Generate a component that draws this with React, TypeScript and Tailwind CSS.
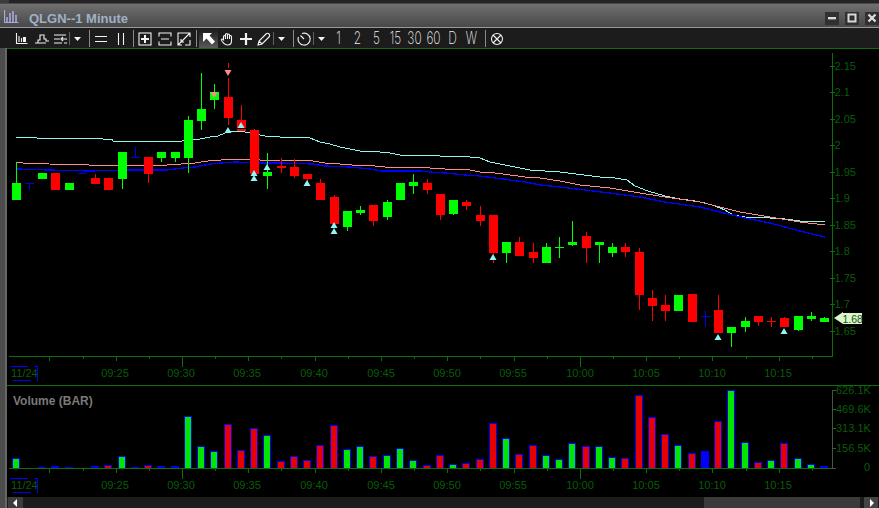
import React from "react";

type C = [number, number, number, number, number, string];
const G = "#00ff00", R = "#ff0000", B = "#0000e0";
// x-left, bodyTop, bodyBottom, wickTop, wickBottom, color
const candles: C[] = [
  [12,183,200,162,200,G],[38,173,179,173,179,G],[51,173,190,173,190,R],[65,183,190,183,190,G],
  [91,178,184,174,184,R],[104,178,190,178,190,R],[118,152,179,152,189,G],[144,157,174,157,183,R],
  [157,152,158,152,162,G],[171,152,158,152,162,G],[184,120,158,116,173,G],[197,109,121,73,130,G],
  [210,92,100,84,109,G],[224,97,118,63,125,R],[237,120,131,105,131,R],[250,130,174,129,174,R],
  [263,172,176,153,189,G],[277,166,168,158,173,R],[290,167,176,159,178,R],[303,174,179,174,182,R],
  [316,183,200,179,200,R],[330,197,224,195,224,R],[343,211,227,211,231,G],[356,210,213,206,215,G],
  [369,205,221,205,226,R],[383,202,217,200,220,G],[396,183,200,183,200,G],[409,182,186,174,194,G],
  [423,183,190,179,194,R],[436,194,215,194,220,R],[449,200,214,200,215,G],[462,202,206,200,210,R],
  [476,215,221,206,226,R],[489,215,253,215,263,R],[502,242,253,242,263,G],[515,242,256,237,256,R],
  [529,252,258,243,263,R],[542,247,263,243,263,G],[568,242,245,221,246,G],[582,236,248,232,263,R],
  [595,242,245,242,263,G],[608,247,253,243,257,G],[621,247,252,243,257,R],[635,252,295,248,310,R],
  [648,298,306,290,321,R],[661,305,311,295,321,R],[674,295,311,295,311,G],[688,294,322,294,322,R],
  [714,310,333,295,333,R],[727,327,333,327,347,G],[741,321,327,317,332,G],[754,316,322,316,326,R],
  [780,318,327,317,327,R],[794,316,330,316,331,G],[807,316,319,312,321,G],[820,318,322,317,322,G],
];
// centre x, top, bottom, crossbar y, colour
const dojis: [number, number, number, number, string][] = [
  [29,183,190,183,B],[82,173,173,173,B],[135,147,158,157,B],[559,237,258,247,G],[705,311,327,316,B],[771,317,327,321,R],
];
const upTris: [number, number][] = [[228,127],[241,122],[254,170],[254,175],[267,164],[307,180],[334,222],[334,228],[493,254],[718,334],[784,328]];
const downTris: [number, number][] = [[228,70],[214,92]];

const cyan = "16,137 36,137 37,138 102,138 103,139 112,139 113,141 182,141 190,140 200,139 210,137 218,136 225,133 236,131 245,132 255,134 265,136 280,137 310,138 320,142 330,144 340,147 350,149 360,151 380,152 390,153 400,155 430,155 440,156 460,156 470,157 480,158 485,160 490,162 500,164 510,166 520,168 530,170 545,171 560,172 600,177 615,178 627,180 635,186 648,191 665,196 680,199 695,201 705,203 715,206 725,210 733,215 745,217 770,218 785,219 800,221 825,221";
const pink = "16,162 23,163 49,164 89,165 130,165 167,165 195,163 208,161 221,160 235,159 260,160 280,160 313,161 325,163 340,164 352,165 375,166 385,167 420,167 430,168 445,169 470,170 480,172 495,173 510,175 525,177 540,178 560,181 580,185 610,188 640,193 665,197 700,202 720,207 740,212 770,217 800,222 825,225";
const blue = "17,169 49,170 89,171 130,170 167,170 182,168 195,167 210,164 221,163 235,162 260,163 280,163 313,164 325,166 350,167 370,169 382,171 420,171 430,172 445,173 465,175 480,176 495,178 510,180 525,182 540,185 560,187 585,190 610,193 640,197 665,202 700,207 720,212 745,218 770,223 800,231 825,237";

const prices: [string, number][] = [["2.15",66],["2.1",92],["2.05",119],["2",145],["1.95",172],["1.9",198],["1.85",225],["1.8",251],["1.75",278],["1.7",304],["1.65",331]];
const times: [string, number][] = [["09:25",115],["09:30",181],["09:35",247],["09:40",314],["09:45",381],["09:50",447],["09:55",513],["10:00",580],["10:05",646],["10:10",712],["10:15",778]];

const GV = "#00e600", RV = "#e60000", BV = "#0000ff";
const vols: [number, number, string][] = [
  [12,458,GV],[38,467,BV],[51,466,BV],[65,467,BV],[91,466,BV],[104,465,RV],[118,456,GV],[131,467,BV],[144,465,RV],[157,466,BV],[171,466,BV],
  [184,416,GV],[197,446,GV],[210,451,GV],[224,424,RV],[237,450,RV],[250,428,RV],[263,435,GV],[277,461,RV],[290,456,RV],[303,460,RV],[316,445,RV],
  [330,425,RV],[343,449,GV],[356,446,GV],[369,456,RV],[383,455,GV],[396,448,GV],[409,460,GV],[423,465,RV],[436,455,RV],[449,464,GV],[462,463,RV],
  [476,459,RV],[489,423,RV],[502,438,GV],[515,454,RV],[529,445,RV],[542,455,GV],[555,459,GV],[568,443,GV],[582,446,RV],[595,446,GV],[608,457,GV],
  [621,458,RV],[635,395,RV],[648,417,RV],[661,434,RV],[674,445,GV],[688,453,RV],[701,451,BV],[714,421,RV],[727,390,GV],[741,442,GV],[754,462,RV],
  [767,460,GV],[780,443,RV],[794,458,GV],[807,464,GV],[820,466,BV],
];
const volLabels: [string, number][] = [["626.1K",390],["469.6K",409],["313.1K",428],["156.5K",448],["0",467]];

const AXIS = "#0b6e0b";
const LABEL = "#0a5c0a";
const FONT = "'Liberation Sans', Arial, sans-serif";

function TimeAxis({ y }: { y: number }) {
  const ticks = Array.from({ length: 24 }, (_, i) => i - 4);
  return (
    <g>
      {ticks.map((k) => {
        const x = Math.round(182 + 33.15 * k);
        const len = k % 12 === 0 ? 11 : k % 2 === 0 ? 5 : 3;
        return <rect key={k} x={x} y={y} width={1} height={len} fill={AXIS} />;
      })}
      {times.map(([t, x]) => (
        <text key={t} x={x} y={y + 21} fontSize={11} fill={LABEL} textAnchor="middle" fontFamily={FONT} shapeRendering="auto">{t}</text>
      ))}
      <text x={11} y={y + 21} fontSize={11} fill={LABEL} fontFamily={FONT} shapeRendering="auto">11/24</text>
      <rect x={10} y={y + 10} width={18} height={1} fill="#0000ff" />
      <rect x={34} y={y + 10} width={4} height={1} fill="#0000ff" />
      <rect x={37} y={y + 10} width={1} height={15} fill="#0000ff" />
      <rect x={13} y={y + 24} width={18} height={1} fill="#0000ff" />
    </g>
  );
}

function Icon({ children }: { children: React.ReactNode }) {
  return (
    <svg width="14" height="14" viewBox="0 0 14 14" fill="none" stroke="#f2f2f2" strokeWidth="1.1">
      {children}
    </svg>
  );
}

function Btn({ className, children }: { className: string; children: React.ReactNode }) {
  return <div className={`flex items-center justify-center shrink-0 h-full ${className}`}>{children}</div>;
}
const Sep = ({ bright }: { bright?: boolean }) =>
  bright ? <div className="w-px h-[17px] bg-[#8a8a8a] shrink-0" /> : <div className="w-px h-[13px] bg-[#5f5f5f] shrink-0" />;
const Tri = () => (
  <Btn className="w-[14px]">
    <svg width="7" height="4" viewBox="0 0 7 4"><path d="M0 0h7L3.5 4z" fill="#f2f2f2" /></svg>
  </Btn>
);
const Tf = ({ t }: { t: string }) => (
  <div className="w-[19px] h-full flex items-center justify-center shrink-0 text-[#f4f4f4] text-[17px] font-extralight leading-none font-['Inter',sans-serif] scale-x-[0.7]">{t}</div>
);

const WinBtn = ({ children }: { children: React.ReactNode }) => (
  <div className="w-[14px] h-[13px] bg-[#303030] flex items-center justify-center">
    <svg width="10" height="10" viewBox="0 0 10 10">{children}</svg>
  </div>
);

export default function App() {
  return (
    <div className="w-[879px] h-[508px] flex flex-col overflow-hidden bg-[#1c1c1c] font-['Liberation_Sans',Arial,sans-serif]">
      <div className="h-[4px] shrink-0 bg-[#242424] border-b border-[#4a4a4a] flex">
        <div className="w-[9px] bg-[#3c3c3c]" />
      </div>
      <div className="h-[24px] shrink-0 flex items-center pl-[4px] pt-[5px] pr-0 bg-gradient-to-b from-[#707070] to-[#484848] border-b border-[#9a9a9a]">
        <svg width="15" height="13" viewBox="0 0 15 13" fill="none" stroke="#a8a8e0" strokeWidth="1.2" className="-mt-[3px]">
          <path d="M0.5 0v12.5h14" />
          <path d="M3 12V7M6 12V3M9 12V1M12 12V5" strokeWidth="1.6" />
        </svg>
        <span className="ml-[10px] text-[13px] font-bold text-[#9fb1c6] leading-none">QLGN--1 Minute</span>
        <div className="ml-auto flex items-center gap-[6px]">
          <WinBtn><rect x="1" y="4" width="8" height="2.4" fill="#d8d8d8" /></WinBtn>
          <WinBtn><rect x="1.5" y="1.5" width="7" height="7" fill="none" stroke="#d8d8d8" strokeWidth="2" /></WinBtn>
          <WinBtn><path d="M1.500 1.500l7 7M8.500 1.500l-7 7" stroke="#e0e0e0" strokeWidth="2.2" /></WinBtn>
        </div>
      </div>
      <div className="h-[20px] shrink-0 flex items-center pl-[12px] pt-px bg-[#1c1c1c]">
        <Btn className="w-[20px]">
          <Icon><path d="M1.500 1v10.500h11M4 10V4M6.500 10V6" /><rect x="8" y="5" width="3" height="5" fill="#f2f2f2" stroke="none" /></Icon>
        </Btn>
        <Btn className="w-[19px]">
          <Icon><path d="M0 11h3V8h2V3h4v4h2v2h3M3 11h8" /></Icon>
        </Btn>
        <Btn className="w-[18px]">
          <Icon><path d="M1 3h12M1 7h6M1 11h8M9 7h4a2 2 0 0 1 0 4h-2M10 5L8 7l2 2" /></Icon>
        </Btn>
        <Sep />
        <Tri />
        <div className="w-[5px] shrink-0" />
        <Sep bright />
        <Btn className="w-[21px]"><Icon><path d="M1 4.500h12M1 9.500h12" /></Icon></Btn>
        <Btn className="w-[19px]"><Icon><path d="M4.500 1v12M9.500 1v12" /></Icon></Btn>
        <div className="w-[3px] shrink-0" />
        <Sep bright />
        <Btn className="w-[21px]"><Icon><rect x="1" y="1" width="12" height="12" /><path d="M7 3v8M3 7h8" strokeWidth="2" /></Icon></Btn>
        <Btn className="w-[19px]"><Icon><path d="M1 4.500V1h12v3.500M1 9.500V13h12V9.500M3 7h8" /></Icon></Btn>
        <Btn className="w-[19px]"><Icon><path d="M13 5V1H1v12h4M8 13h5V8M1 13L13 1M4 7v3h3" /></Icon></Btn>
        <div className="w-[3px] shrink-0" />
        <Sep bright />
        <div className="w-[2px] shrink-0" />
        <Btn className="w-[19px] bg-gradient-to-b from-[#1c1c1c] to-[#5a5a5a]">
          <svg width="14" height="14" viewBox="0 0 14 14"><path d="M1 1h9L7.500 3.500 13 9.500 10 12.500 4.500 6.500 1 10z" fill="#ffffff" /></svg>
        </Btn>
        <Btn className="w-[18px]">
          <Icon><path d="M3.500 8V4.500a1 1 0 0 1 2 0V7M5.500 7V2.500a1 1 0 0 1 2 0V7M7.500 7V3a1 1 0 0 1 2 0v4M9.500 7V4.500a1 1 0 0 1 2 0V9c0 2.500-1.500 4-4 4S4.500 12 3.500 11L1.500 8.500c-.6-1 .7-2 1.500-1.200L4 8.500" /></Icon>
        </Btn>
        <Btn className="w-[19px]"><Icon><path d="M7 1v12M1 7h12" strokeWidth="2.2" /></Icon></Btn>
        <Btn className="w-[18px]"><Icon><path d="M1 13l1-4 7-7a1.500 1.500 0 0 1 3 3l-7 7zM2 9l3 3" /></Icon></Btn>
        <Sep />
        <Tri />
        <div className="w-[5px] shrink-0" />
        <Sep bright />
        <Btn className="w-[19px]">
          <Icon><path d="M5 1.500A6 6 0 1 1 1.500 5M3.500 3.500L7 7" /></Icon>
        </Btn>
        <Sep />
        <Tri />
        <div className="w-px shrink-0" />
        <Tf t="1" /><Tf t="2" /><Tf t="5" /><Tf t="15" /><Tf t="30" /><Tf t="60" /><Tf t="D" /><Tf t="W" />
        <div className="w-[4px] shrink-0" />
        <Sep bright />
        <Btn className="w-[22px]">
          <Icon><circle cx="7" cy="7" r="5.500" /><path d="M3 3l8 8M11 3l-8 8" /></Icon>
        </Btn>
      </div>
      <div className="flex-1 min-h-0 flex">
        <div className="w-[7px] shrink-0 bg-[#4c4c4c] border-r-2 border-[#666666]" />
        <div className="flex-1 min-w-0 flex flex-col">
          <div className="h-[338px] shrink-0 bg-black border-t border-b border-[#0b6e0b]">
            <svg width="872" height="336" viewBox="7 49 872 336" className="block" shapeRendering="crispEdges">
              <rect x={9} y={356} width={824} height={1} fill={AXIS} />
              <rect x={832} y={53} width={1} height={304} fill={AXIS} />
              {prices.map(([p, y]) => (
                <g key={p}>
                  <rect x={830} y={y} width={5} height={1} fill={AXIS} />
                  <text x={834.500} y={y + 4} fontSize={11} fill={LABEL} fontFamily={FONT} shapeRendering="auto">{p}</text>
                </g>
              ))}
              <TimeAxis y={356} />
              <polyline points={cyan} fill="none" stroke="#8ff5f0" strokeWidth={1} />
              <polyline points={pink} fill="none" stroke="#ff8a8a" strokeWidth={1} />
              <polyline points={blue} fill="none" stroke="#0000ff" strokeWidth={1.300} />
              {candles.map(([x, t, b, wt, wb, c], i) => (
                <g key={i}>
                  <rect x={x + 4} y={wt} width={1} height={wb - wt} fill={c} />
                  <rect x={x} y={t} width={9} height={b - t} fill={c} />
                </g>
              ))}
              {dojis.map(([x, t, b, m, c], i) => (
                <g key={i}>
                  <rect x={x} y={t} width={1} height={b - t} fill={c} />
                  <rect x={x - 4} y={m} width={9} height={1} fill={c} />
                </g>
              ))}
              <rect x={237} y={128} width={9} height={1} fill="#000" />
              <rect x={224} y={68} width={9} height={10} fill="#000" />
              {upTris.map(([x, y], i) => (
                <polygon key={i} points={`${x},${y} ${x + 3.500},${y + 6} ${x - 3.500},${y + 6}`} fill="#8ff5f5" shapeRendering="auto" />
              ))}
              {downTris.map(([x, y], i) => (
                <polygon key={i} points={`${x - 3.500},${y} ${x + 3.500},${y} ${x},${y + 6}`} fill="#ff8a8a" shapeRendering="auto" />
              ))}
              <polygon points="834,318 843,312 843,313 862,313 862,324 843,324" fill="#d9f7c9" shapeRendering="auto" />
              <text x={842.500} y={322.500} fontSize={10.500} fill="#1a521a" fontFamily={FONT} shapeRendering="auto">1.68</text>
            </svg>
          </div>
          <div className="h-[111px] shrink-0 bg-black">
            <svg width="872" height="111" viewBox="7 386 872 111" className="block overflow-visible" shapeRendering="crispEdges">
              <text x={13} y={405} fontSize={12} fontWeight={700} fill="#7a7a7a" fontFamily={FONT} shapeRendering="auto">Volume (BAR)</text>
              {vols.map(([x, y, c], i) => (
                <rect key={i} x={x + 0.500} y={y + 0.500} width={7} height={467.500 - y} fill={c} stroke="#0000ff" strokeWidth={1} />
              ))}
              <rect x={9} y={468} width={824} height={1} fill={AXIS} />
              <rect x={832} y={390} width={1} height={78} fill="#3d5a3d" />
              {volLabels.map(([l, y]) => (
                <g key={l}>
                  <rect x={832} y={l === "0" ? 468 : y} width={4} height={1} fill="#3d5a3d" />
                  <text x={l === "0" ? 864 : 836} y={y + 4} fontSize={11} fill={LABEL} fontFamily={FONT} shapeRendering="auto">{l}</text>
                </g>
              ))}
              <TimeAxis y={468} />
            </svg>
          </div>
          <div className="flex-1 min-h-0 flex bg-[#1c1c1c]">
            <div className="w-[15px] ml-px bg-[#3c3c3c] flex items-center justify-center shrink-0">
              <svg width="5" height="8" viewBox="0 0 5 8"><path d="M4 0v8L0 4z" fill="#fff" /></svg>
            </div>
            <div className="ml-auto w-[156px] bg-[#3a3a3a] shrink-0" />
            <div className="w-[14px] ml-[4px] mr-px bg-[#444444] flex items-center justify-center shrink-0">
              <svg width="5" height="8" viewBox="0 0 5 8"><path d="M1 0v8l4-4z" fill="#fff" /></svg>
            </div>
          </div>
        </div>
      </div>
    </div>
  );
}
